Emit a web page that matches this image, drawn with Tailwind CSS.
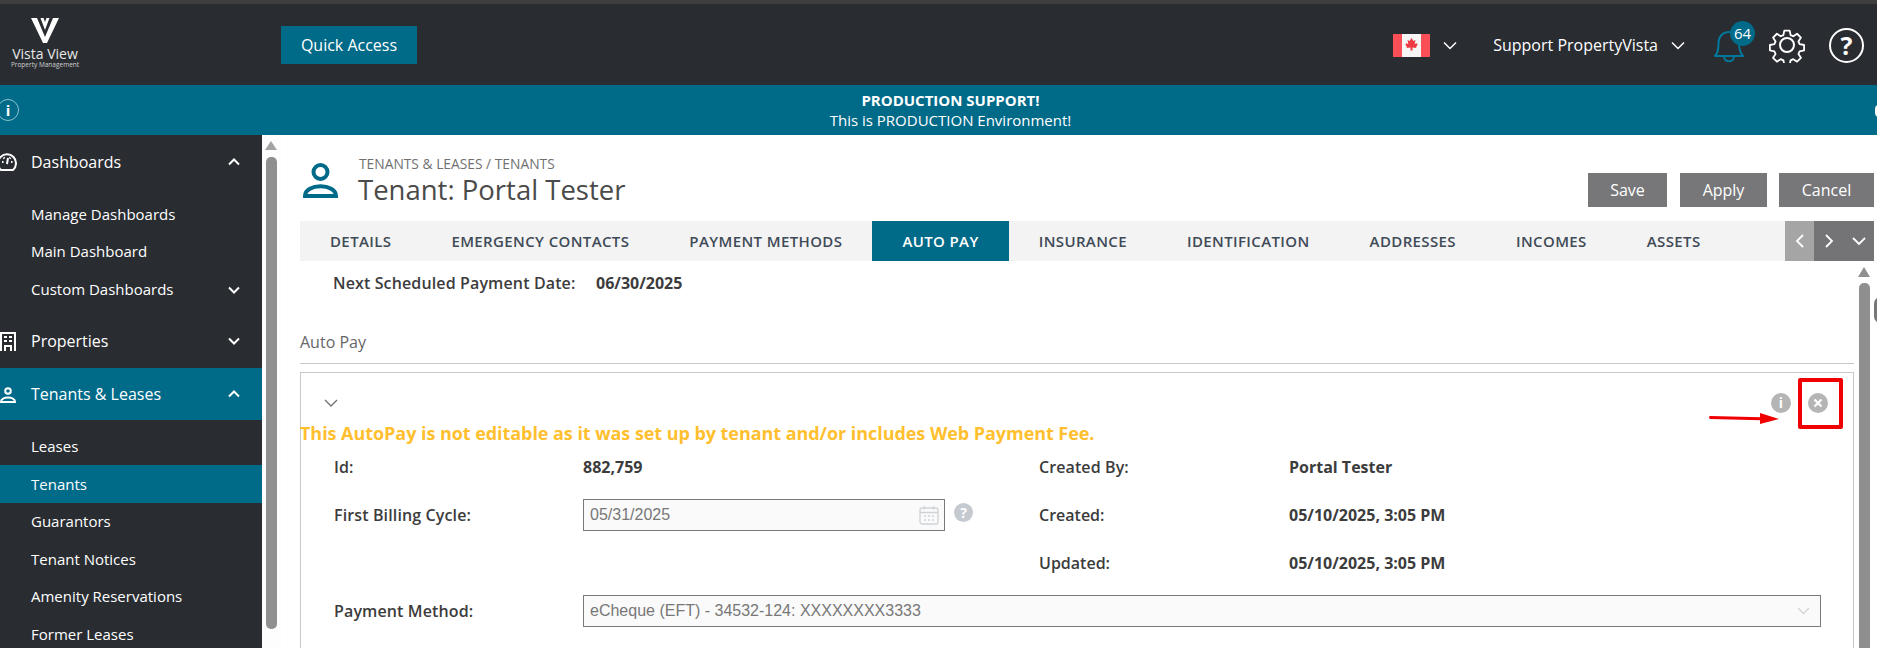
<!DOCTYPE html>
<html><head><meta charset="utf-8"><script src="https://cdn.jsdelivr.net/npm/@tailwindcss/browser@4"></script></head>
<body class="m-0 overflow-hidden bg-white">
<div class="w-[1877px] h-[648px] overflow-hidden flex flex-col font-['Open_Sans',sans-serif] text-[#3c3c3c]">
  <div class="h-[5px] shrink-0 bg-[#3f3f3f] border-b border-[#2c2c2c]"></div>
  <header class="h-[80px] shrink-0 bg-[#292c31] flex items-center text-white">
    <div class="w-[281px] shrink-0 pl-[12px] mb-[5px]">
      <div class="w-[66px] flex flex-col items-center">
        <svg width="28" height="25" viewBox="0 0 28 25"><path d="M0 0h6l8 19 8-19h6L16 25h-4z" fill="#fff"/><path d="M9.500 0h3l1.500 4 1.500-4h3L14 12z" fill="#fff"/></svg>
        <div class="text-[14px] leading-[15px] mt-[3px] text-[#e8e8e8] whitespace-nowrap">Vista View</div>
        <div class="text-[6.5px] leading-[7px] text-[#cfcfcf] whitespace-nowrap">Property Management</div>
      </div>
    </div>
    <button class="w-[136px] h-[38px] bg-[#006a89] text-[16px]">Quick Access</button>
    <div class="ml-auto flex items-center">
      <svg width="37" height="23" viewBox="0 0 37 23"><rect width="37" height="23" fill="#f5f5f5"/><rect width="9" height="23" fill="#fa4f57"/><rect x="28" width="9" height="23" fill="#fa4f57"/><path d="M18.500 4l2 3 2-1-.8 4 2.300-.8.500 1.800-1.500 2 .5 1-4-.5v3h-2v-3l-4 .5.500-1-1.500-2 .5-1.800 2.300.8-.8-4 2 1z" fill="#ee3b43"/></svg>
      <svg class="ml-[13px]" width="14" height="9" viewBox="0 0 14 9" fill="none" stroke="#fff" stroke-width="1.500"><path d="M1 1.500l6 6 6-6"/></svg>
      <span class="ml-[36px] text-[16px] whitespace-nowrap">Support PropertyVista</span>
      <svg class="ml-[13px]" width="14" height="9" viewBox="0 0 14 9" fill="none" stroke="#fff" stroke-width="1.500"><path d="M1 1.500l6 6 6-6"/></svg>
      <div class="relative ml-[28px] w-[34px] h-[36px]">
        <svg width="34" height="36" viewBox="0 0 34 36" fill="none" stroke="#00789b" stroke-width="2"><path d="M2 29c3-3 3.500-6 3.500-13 0-6 4-11 10.500-11s10 5 10 11c0 7 1 10 4 13z" stroke-linejoin="round"/><path d="M11 29c0 7 10 7 10 0"/></svg>
        <span class="absolute left-[17px] top-[-6px] w-[25px] h-[25px] rounded-full bg-[#006a89] text-[15px] leading-[25px] text-center">64</span>
      </div>
      <svg class="ml-[22px]" width="36" height="36" viewBox="0 0 36 36" fill="none" stroke="#fff" stroke-width="2"><circle cx="18" cy="18" r="7"/><path d="M15 2h6l1 5 3 1.300 4.200-2.800 4.300 4.300-2.800 4.200 1.300 3 5 1v6l-5 1-1.300 3 2.800 4.200-4.300 4.300-4.200-2.800-3 1.300-1 5h-6l-1-5-3-1.300-4.200 2.800-4.300-4.300 2.800-4.200-1.300-3-5-1v-6l5-1 1.300-3-2.800-4.200 4.300-4.300 4.200 2.800 3-1.300z" stroke-linejoin="round" transform="translate(1.800 1.800) scale(.9)"/></svg>
      <div class="ml-[24px] mr-[13px] w-[35px] h-[35px] rounded-full border-2 border-white flex items-center justify-center text-[25px] font-bold leading-none">?</div>
    </div>
  </header>
  <div class="h-[50px] shrink-0 bg-[#006a89] relative text-white text-center text-[15px] leading-[20px] pt-[5px] pl-[24px]">
    <div class="font-bold">PRODUCTION SUPPORT!</div>
    <div>This is PRODUCTION Environment!</div>
    <div class="absolute left-[-3px] top-[14px] w-[22px] h-[22px] rounded-full border border-[#8fc0cf] text-center text-[15px] leading-[20px] font-bold">i</div>
    <div class="absolute right-[-6px] top-[20px] w-[8px] h-[12px] rounded-full bg-white"></div>
  </div>
  <div class="flex flex-1 min-h-0">
    <aside class="w-[262px] shrink-0 bg-[#292c31] text-white relative">
      <div class="h-[54px] flex items-center pl-[31px] pr-[22px] text-[16px] justify-between">
        <span>Dashboards</span>
        <svg width="12" height="8" viewBox="0 0 12 8" fill="none" stroke="#fff" stroke-width="2"><path d="M1 6.500l5-5 5 5"/></svg>
      </div>
      <svg class="absolute left-[-3px] top-[17px]" width="20" height="20" viewBox="0 0 20 20" fill="none" stroke="#fff" stroke-width="2"><path d="M4 18a9 9 0 1 1 12 0z"/><path d="M10 12l1-6M5 10h1.500M14 10h1.500M6.500 5.500l1 1M13.500 5.500l-1 1"/></svg>
      <div class="text-[15px] pt-[6px]">
        <div class="h-[38px] flex items-center pl-[31px]">Manage Dashboards</div>
        <div class="h-[37px] flex items-center pl-[31px]">Main Dashboard</div>
        <div class="h-[39px] flex items-center pl-[31px] pr-[22px] justify-between"><span>Custom Dashboards</span><svg width="12" height="8" viewBox="0 0 12 8" fill="none" stroke="#fff" stroke-width="2"><path d="M1 1.500l5 5 5-5"/></svg></div>
      </div>
      <div class="h-[56px] mt-[3px] pt-[2px] flex items-center pl-[31px] pr-[22px] text-[16px] justify-between relative">
        <span>Properties</span>
        <svg width="12" height="8" viewBox="0 0 12 8" fill="none" stroke="#fff" stroke-width="2"><path d="M1 1.500l5 5 5-5"/></svg>
        <svg class="absolute left-0 top-[20px]" width="16" height="19" viewBox="0 0 16 19" fill="none" stroke="#fff" stroke-width="2"><path d="M1 19V1h14v18M5 19v-5h6v5"/><path d="M4 5h3M9 5h3M4 9h3M9 9h3"/></svg>
      </div>
      <div class="h-[52px] bg-[#006a89] flex items-center pl-[31px] pr-[22px] text-[16px] justify-between relative">
        <span>Tenants &amp; Leases</span>
        <svg width="12" height="8" viewBox="0 0 12 8" fill="none" stroke="#fff" stroke-width="2"><path d="M1 6.500l5-5 5 5"/></svg>
        <svg class="absolute left-0 top-[19px]" width="16" height="16" viewBox="0 0 16 16" fill="none" stroke="#fff" stroke-width="2"><circle cx="8" cy="4" r="2.800"/><path d="M1 15c0-6 14-6 14 0z"/></svg>
      </div>
      <div class="text-[15px] pt-[7px]">
        <div class="h-[38px] flex items-center pl-[31px]">Leases</div>
        <div class="h-[38px] flex items-center pl-[31px] bg-[#006a89]">Tenants</div>
        <div class="h-[37px] flex items-center pl-[31px]">Guarantors</div>
        <div class="h-[38px] flex items-center pl-[31px]">Tenant Notices</div>
        <div class="h-[37px] flex items-center pl-[31px]">Amenity Reservations</div>
        <div class="h-[38px] flex items-center pl-[31px]">Former Leases</div>
      </div>
    </aside>
    <div class="w-[19px] shrink-0 bg-[#fdfdfd] relative">
      <div class="absolute left-[3px] top-[6px] w-0 h-0 border-x-[6.500px] border-x-transparent border-b-[9px] border-b-[#a3a3a3]"></div>
      <div class="absolute left-[4px] top-[22px] w-[11px] h-[472px] rounded-[5px] bg-[#8f8f8f]"></div>
    </div>
    <main class="flex-1 min-w-0 relative pl-[19px] pr-[3px]">
      <div class="flex h-[86px] relative">
        <svg class="absolute left-[3px] top-[28px]" width="35" height="35" viewBox="0 0 35 35" fill="none" stroke="#006a89" stroke-width="4"><circle cx="17.500" cy="9" r="7"/><path d="M2 33c0-13 31-13 31 0z"/></svg>
        <div class="pl-[58px] pt-[20px]">
          <div class="text-[13.800px] leading-[18px] pl-[1px] text-[#707070] whitespace-nowrap">TENANTS &amp; LEASES / TENANTS</div>
          <div class="text-[27.500px] leading-[34px] text-[#4a4a4a] whitespace-nowrap">Tenant: Portal Tester</div>
        </div>
        <div class="ml-auto flex gap-[13px] items-start pt-[38px] text-white text-[16px]">
          <button class="w-[79px] h-[34px] bg-[#777779]">Save</button>
          <button class="w-[87px] h-[34px] bg-[#777779]">Apply</button>
          <button class="w-[95px] h-[34px] bg-[#777779] -ml-[1px]">Cancel</button>
        </div>
      </div>
      <nav class="h-[40px] bg-[#f3f3f3] flex items-stretch text-[15px] font-semibold tracking-[0.38px] text-[#3f4a57] whitespace-nowrap">
        <div class="px-[30px] flex items-center">DETAILS</div>
        <div class="px-[30px] flex items-center">EMERGENCY CONTACTS</div>
        <div class="px-[30px] flex items-center">PAYMENT METHODS</div>
        <div class="px-[30px] flex items-center bg-[#006a89] text-white">AUTO PAY</div>
        <div class="px-[30px] flex items-center">INSURANCE</div>
        <div class="px-[30px] flex items-center">IDENTIFICATION</div>
        <div class="px-[30px] flex items-center">ADDRESSES</div>
        <div class="px-[30px] flex items-center">INCOMES</div>
        <div class="px-[30px] flex items-center">ASSETS</div>
        <div class="ml-auto flex">
          <div class="w-[29px] bg-[#a5a5a5] flex items-center justify-center"><svg width="9" height="14" viewBox="0 0 9 14" fill="none" stroke="#fff" stroke-width="1.800"><path d="M8 1L2 7l6 6"/></svg></div>
          <div class="w-[30px] bg-[#747476] flex items-center justify-center"><svg width="9" height="14" viewBox="0 0 9 14" fill="none" stroke="#fff" stroke-width="1.800"><path d="M1 1l6 6-6 6"/></svg></div>
          <div class="w-[30px] bg-[#747476] flex items-center justify-center"><svg width="14" height="9" viewBox="0 0 14 9" fill="none" stroke="#fff" stroke-width="1.800"><path d="M1 1l6 6 6-6"/></svg></div>
        </div>
      </nav>
      <div class="pr-[20px] relative">
        <div class="absolute left-[1558px] top-[6px] w-0 h-0 border-x-[6.500px] border-x-transparent border-b-[10px] border-b-[#8f8f8f]"></div>
        <div class="absolute left-[1559px] top-[22px] w-[11px] h-[400px] rounded-t-[5px] bg-[#8f8f8f]"></div>
        <div class="h-[43px] flex items-center pl-[33px] text-[16px] font-semibold text-[#3c3c3c] whitespace-nowrap">
          <span class="w-[263px] tracking-[0.13px]">Next Scheduled Payment Date:</span><span class="font-bold">06/30/2025</span>
        </div>
        <div class="mt-[17px] h-[43px] pt-[9px] border-b border-[#c8c8c8] text-[16px] text-[#666] leading-[24px]">Auto Pay</div>
        <section class="mt-[8px] h-[300px] border border-[#c8c8c8] border-b-0 relative">
          <div class="h-[48px] pt-[26px] pl-[23px]"><svg class="block" width="14" height="8" viewBox="0 0 14 8" fill="none" stroke="#707070" stroke-width="1.300"><path d="M1 1l6 6 6-6"/></svg></div>
          <div class="-ml-[1px] h-[24px] text-[18px] font-bold tracking-[-0.055px] text-[#ffbf2e] leading-[24px] whitespace-nowrap">This AutoPay is not editable as it was set up by tenant and/or includes Web Payment Fee.</div>
          <div class="mt-[6px] pl-[33px] pr-[32px] grid grid-cols-[249px_456px_250px_1fr] auto-rows-[32px] gap-y-[16px] items-center text-[16px] text-[#3c3c3c]">
            <span class="font-semibold tracking-[0.13px]">Id:</span><span class="font-bold">882,759</span><span class="font-semibold tracking-[0.1px]">Created By:</span><span class="font-bold">Portal Tester</span>
            <span class="font-semibold tracking-[0.13px]">First Billing Cycle:</span>
            <div class="relative">
              <div class="w-[362px] h-[32px] border border-[#7a7a7a] bg-[#fafafa] pl-[6px] font-['Liberation_Sans',sans-serif] text-[#777] leading-[30px] relative">05/31/2025
                <svg class="absolute right-[5px] top-[5px]" width="20" height="20" viewBox="0 0 20 20" fill="none" stroke="#cfd3d6" stroke-width="1.300"><rect x="1" y="3" width="18" height="16" rx="2"/><path d="M1 7.500h18M5.500 1v3.500M14.500 1v3.500"/><path d="M5 11h2M9 11h2M13 11h2M5 15h2M9 15h2M13 15h2"/></svg>
              </div>
              <div class="absolute left-[371px] top-[4px] w-[19px] h-[19px] rounded-full bg-[#c5cad0] text-white text-[14px] font-bold leading-[19px] text-center">?</div>
            </div>
            <span class="font-semibold">Created:</span><span class="font-bold">05/10/2025, 3:05 PM</span>
            <span></span><span></span>
            <span class="font-semibold">Updated:</span><span class="font-bold">05/10/2025, 3:05 PM</span>
            <span class="font-semibold tracking-[0.13px]">Payment Method:</span>
            <div class="col-span-3 h-[32px] border border-[#7a7a7a] bg-[#fafafa] pl-[6px] font-['Liberation_Sans',sans-serif] text-[#777] leading-[30px] relative">eCheque (EFT) - 34532-124: XXXXXXXX3333
              <svg class="absolute right-[10px] top-[11px]" width="13" height="8" viewBox="0 0 13 8" fill="none" stroke="#d4d4d4" stroke-width="1.300"><path d="M1 1l5.500 5.500L12 1"/></svg>
            </div>
          </div>
          <div class="absolute right-[25px] top-[20px] flex gap-[17px]">
            <div class="w-[20px] h-[20px] rounded-full bg-[#b5b5b5] text-white text-[14px] font-bold leading-[20px] text-center">i</div>
            <div class="w-[20px] h-[20px] rounded-full bg-[#b5b5b5] flex items-center justify-center"><svg width="10" height="10" viewBox="0 0 10 10" stroke="#fff" stroke-width="2.200"><path d="M1.500 1.500l7 7M8.500 1.500l-7 7"/></svg></div>
          </div>
          <div class="absolute right-[10px] top-[5px] w-[45px] h-[51px] border-[4px] border-[#f00000] rounded-[2px]"></div>
          <svg class="absolute right-[74px] top-[38px]" width="70" height="16" viewBox="0 0 70 16"><path d="M1.500 6.500L52 7.800" stroke="#f00000" stroke-width="3" stroke-linecap="round"/><path d="M51 2l19 6-19 5z" fill="#f00000"/></svg>
        </section>
      </div>
      <div class="absolute right-[-10px] top-[162px] w-[13px] h-[26px] rounded-full bg-[#777]"></div>
    </main>
  </div>
</div>
</body></html>
